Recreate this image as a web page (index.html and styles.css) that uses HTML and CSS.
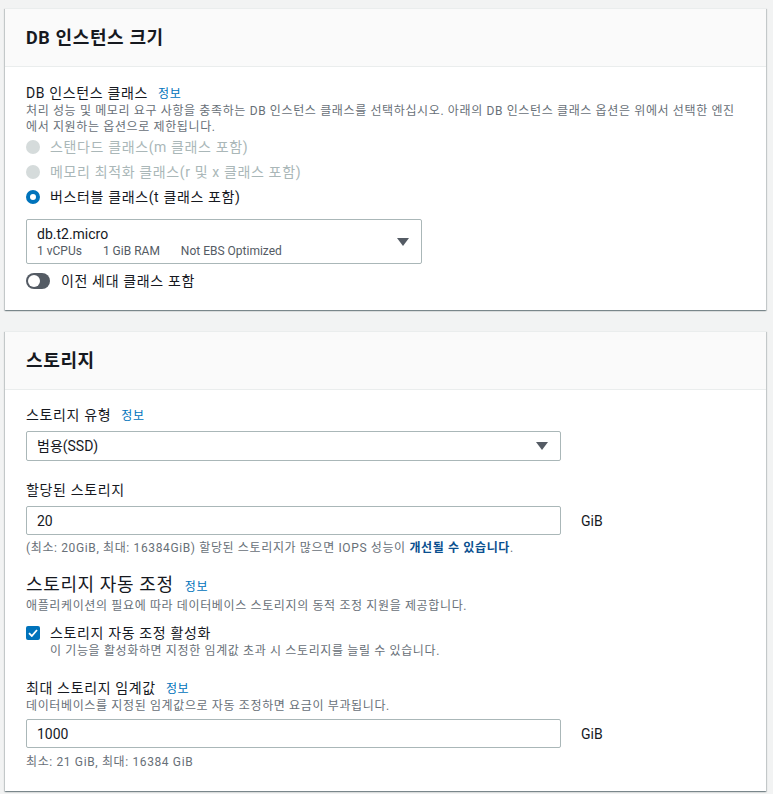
FILE: index.html
```html
<!DOCTYPE html>
<html lang="ko">
<head>
<meta charset="utf-8">
<title>RDS</title>
<link rel="stylesheet" href="styles.css">
</head>
<body>
<div class="page">
  <section class="panel">
    <header class="panel-head"><h2>DB 인스턴스 크기</h2></header>
    <div class="panel-body p1">
      <div class="label">DB 인스턴스 클래스 <a class="info">정보</a></div>
      <div class="desc">처리 성능 및 메모리 요구 사항을 충족하는 DB 인스턴스 클래스를 선택하십시오. 아래의 DB 인스턴스 클래스 옵션은 위에서 선택한 엔진<br>에서 지원하는 옵션으로 제한됩니다.</div>
      <div class="radios">
        <div class="radio disabled"><span class="dot"></span><span>스탠다드 클래스(m 클래스 포함)</span></div>
        <div class="radio disabled"><span class="dot"></span><span>메모리 최적화 클래스(r 및 x 클래스 포함)</span></div>
        <div class="radio checked"><span class="dot"></span><span>버스터블 클래스(t 클래스 포함)</span></div>
      </div>
      <div class="select big">
        <div class="sel-text">
          <div class="sel-main">db.t2.micro</div>
          <div class="sel-sub"><span>1 vCPUs</span><span>1 GiB RAM</span><span>Not EBS Optimized</span></div>
        </div>
        <span class="caret"></span>
      </div>
      <div class="toggle-row"><span class="toggle"><span class="knob"></span></span><span>이전 세대 클래스 포함</span></div>
    </div>
  </section>

  <section class="panel">
    <header class="panel-head"><h2>스토리지</h2></header>
    <div class="panel-body p2">
      <div class="label">스토리지 유형 <a class="info">정보</a></div>
      <div class="select small"><span class="sel-main">범용(SSD)</span><span class="caret"></span></div>

      <div class="label mt-field">할당된 스토리지</div>
      <div class="input-row"><div class="input">20</div><span class="unit">GiB</span></div>
      <div class="hint">(최소: 20GiB, 최대: 16384GiB) 할당된 스토리지가 많으면 IOPS 성능이 <a class="strong-link">개선될 수 있습니다</a>.</div>

      <div class="subhead">스토리지 자동 조정 <a class="info">정보</a></div>
      <div class="desc">애플리케이션의 필요에 따라 데이터베이스 스토리지의 동적 조정 지원을 제공합니다.</div>
      <div class="check-row">
        <span class="checkbox"><svg width="10" height="8" viewBox="0 0 10 8"><path d="M1 4.2 L3.8 7 L9 1" fill="none" stroke="#fff" stroke-width="1.8"/></svg></span>
        <span>스토리지 자동 조정 활성화</span>
      </div>
      <div class="desc indent">이 기능을 활성화하면 지정한 임계값 초과 시 스토리지를 늘릴 수 있습니다.</div>

      <div class="label mt-max">최대 스토리지 임계값 <a class="info">정보</a></div>
      <div class="desc">데이터베이스를 지정된 임계값으로 자동 조정하면 요금이 부과됩니다.</div>
      <div class="input-row mt-in"><div class="input">1000</div><span class="unit">GiB</span></div>
      <div class="hint last">최소: 21 GiB, 최대: 16384 GiB</div>
    </div>
  </section>
</div>
</body>
</html>
```

FILE: styles.css
```css
* { box-sizing: border-box; }
html, body { margin: 0; padding: 0; }
body {
  background: #f2f3f3;
  font-family: Roboto, "Noto Sans CJK KR", sans-serif;
  color: #16191f;
  font-size: 14px;
  letter-spacing: 0.045em;
}
.page {
  padding: 8px 7px 4px 5px;
  display: flex;
  flex-direction: column;
  gap: 21px;
}
.panel {
  background: #fff;
  box-shadow: 0 1px 1px 0 rgba(0, 28, 36, 0.3), 1px 1px 1px 0 rgba(0, 28, 36, 0.15), -1px 1px 1px 0 rgba(0, 28, 36, 0.15);
  border-top: 1px solid #eaeded;
}
.panel-head {
  background: #fafafa;
  border-bottom: 1px solid #eaeded;
  padding: 18px 21px 18px 21px;
}
.panel-head h2 {
  margin: 0;
  font-size: 18px;
  font-weight: 700;
  line-height: 21px;
  color: #16191f;
}
.panel-body { padding: 16px 21px 19px 21px; }
.p2 { padding-top: 15px; padding-bottom: 21px; }
.label { font-size: 14px; line-height: 20px; height: 20px; }
.info {
  color: #0073bb;
  font-size: 12px;
  font-weight: 400;
  margin-left: 6px;
  line-height: 1;
}
.desc { font-size: 12px; line-height: 16px; color: #687078; }
.desc.indent { padding-left: 24px; }
.radios { margin-top: 2px; display: flex; flex-direction: column; gap: 5px; }
.radio { display: flex; align-items: center; gap: 10px; line-height: 20px; }
.radio .dot {
  width: 14px; height: 14px; border-radius: 50%;
  background: #d5dbdb; flex: none;
}
.radio.disabled { color: #aab7b8; }
.radio.checked .dot { background: #fff; border: 4px solid #0073bb; }
.select {
  border: 1px solid #aab7b8;
  border-radius: 2px;
  display: flex;
  align-items: center;
  justify-content: space-between;
  padding: 0 12px 0 10px;
  letter-spacing: 0;
}
.select.big { width: 396px; height: 45px; margin-top: 12px; }
.select.small { width: 535px; height: 30px; margin-top: 6px; }
.sel-main { font-size: 14px; line-height: 18px; }
.sel-sub { font-size: 12px; line-height: 16px; color: #545b64; display: flex; gap: 21px; }
.caret {
  width: 0; height: 0;
  border-left: 6px solid transparent;
  border-right: 6px solid transparent;
  border-top: 8px solid #545b64;
}
.toggle-row { display: flex; align-items: center; gap: 11px; margin-top: 7px; line-height: 20px; }
.toggle {
  width: 24px; height: 16px; border-radius: 8px;
  background: #545b64; display: flex; align-items: center; padding: 0 2px;
}
.knob { width: 12px; height: 12px; border-radius: 50%; background: #fff; }
.mt-field { margin-top: 19px; }
.input-row { display: flex; align-items: center; gap: 20px; margin-top: 6px; }
.input {
  width: 535px; height: 29px;
  border: 1px solid #aab7b8; border-radius: 2px;
  padding: 0 10px;
  display: flex; align-items: center;
  font-size: 14px;
  letter-spacing: 0;
}
.unit { font-size: 14px; letter-spacing: 0; }
.hint { font-size: 12px; line-height: 16px; color: #687078; margin-top: 5px; }
.hint.last { margin-top: 6px; }
.strong-link { color: #0a4f8f; font-weight: 700; }
.subhead { font-size: 18px; line-height: 24px; margin-top: 17px; height: 25px; }
.check-row { display: flex; align-items: center; gap: 10px; margin-top: 9px; line-height: 20px; }
.checkbox {
  width: 14px; height: 14px; border-radius: 2px; background: #0073bb;
  display: flex; align-items: center; justify-content: center; flex: none;
}
.mt-max { margin-top: 19px; }
.mt-in { margin-top: 5px; }
```
